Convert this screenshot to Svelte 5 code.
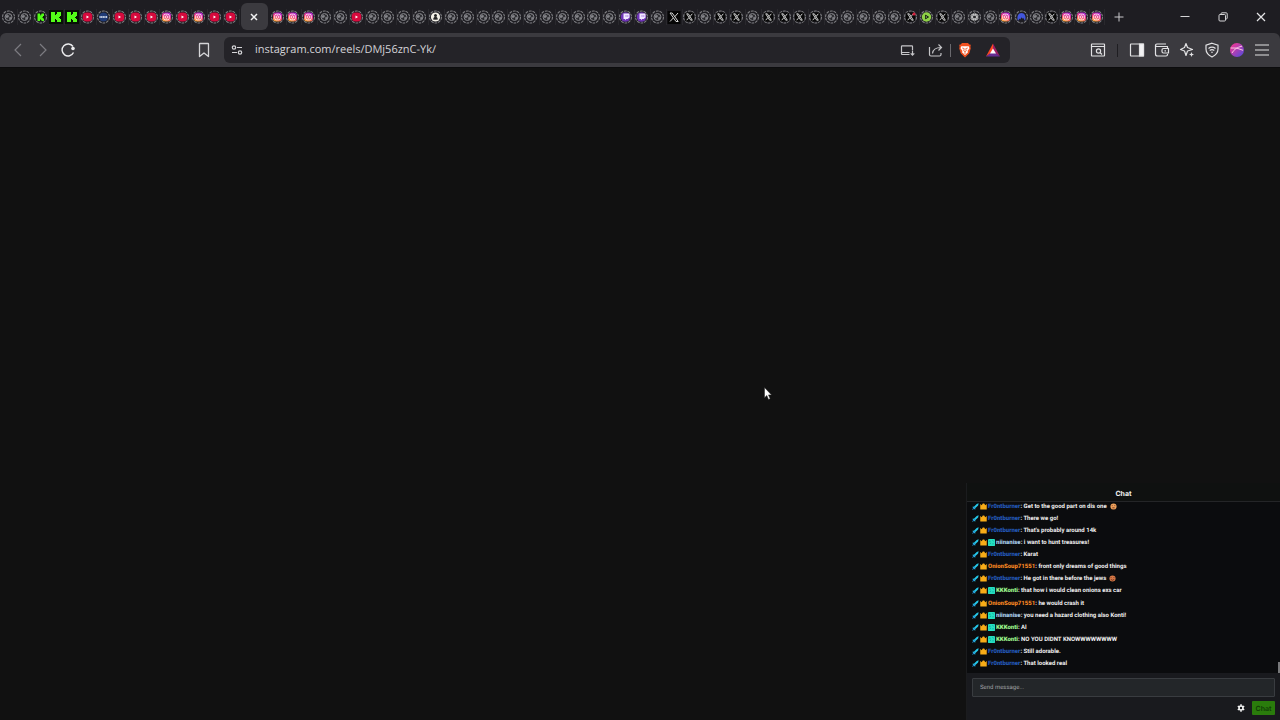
<script>
	let address = 'instagram.com/reels/DMj56znC-Yk/'
	let message = ''

	// one word per tab, "name*3" repeats it
	const before = expand('globe*2 kick kickbig*2 youtube disc youtube*3 insta youtube insta youtube*2')
	const after = expand('insta*3 globe*2 youtube globe*4 wiki globe*11 twitch*2 globe xbig x globe x*2 globe x*4 globe*5 xred rumble x globe gpt globe insta')
	const newest = expand('nord globe x insta*3')

	function expand(list) {
		return list.split(' ').flatMap((item) => {
			const [name, count] = item.split('*')
			return Array(Number(count || 1)).fill(name)
		})
	}

	const users = {
		front: {name: 'Fr0ntburner', color: '#2459b8', badge: false},
		niina: {name: 'niinanise', color: '#a9cbe8', badge: true},
		onion: {name: 'OnionSoup71551', color: '#f28422', badge: false},
		konti: {name: 'KKKonti', color: '#9cf58c', badge: true}
	}

	const messages = [
		{user: users.front, text: 'Get to the good part on dis one', emote: 'smile'},
		{user: users.front, text: 'There we go!'},
		{user: users.front, text: "That's probably around 14k"},
		{user: users.niina, text: 'i want to hunt treasures!'},
		{user: users.front, text: 'Karat'},
		{user: users.onion, text: 'front only dreams of good things'},
		{user: users.front, text: 'He got in there before the jews', emote: 'laugh'},
		{user: users.konti, text: 'that how i would clean onions exs car'},
		{user: users.onion, text: 'he would crash it'},
		{user: users.niina, text: 'you need a hazard clothing also Konti!'},
		{user: users.konti, text: 'Al'},
		{user: users.konti, text: 'NO YOU DIDNT KNOWWWWWWWW'},
		{user: users.front, text: 'Still adorable.'},
		{user: users.front, text: 'That looked real'}
	]
</script>

{#snippet favicon(kind)}
	<svg class="favicon" viewBox="0 0 16 16" aria-hidden="true">
		{#if kind == 'kickbig'}
			<rect x="1" y="1" width="14" height="14" fill="#071006" />
			<path d="M3 3h4v3h1V5h1V3h4v4h-1v1h-1v1h1v1h1v3H9v-2H8v-1H7v3H3z" fill="#53fc18" />
		{:else if kind == 'xbig'}
			<rect x="1.500" y="2" width="13" height="13" fill="#050505" />
			<path d="M4 4h2.200l6 8.500h-2.200zM12 4L8.700 7.800M7.300 9L4 12.500" fill="none" stroke="#d5d5d5" stroke-width="1" />
		{:else}
			<circle cx="7.500" cy="8" r="6" fill="none" stroke="#7f7f83" stroke-width="1.100" stroke-dasharray="2.800 .9" />
			<g transform="translate(-0.500 -0.500)">
				{#if kind == 'globe'}
					<circle cx="8" cy="8.500" r="3.500" fill="#2a2a2e" stroke="#85858a" stroke-width="1" />
					<path d="M5 7.500l2-1 1.500 1-1 1.500-1.500.5zM9 9l2-.5-.5 2-1.500.5zM8.500 5.500l2 1" fill="#85858a" stroke="#77777c" stroke-width="0.600" />
				{:else if kind == 'kick'}
					<rect x="4" y="4.500" width="8" height="8" fill="#0b1808" />
					<path d="M5 5h2.500v2h.5V6h1V5h2.500v2.500h-1v1h-1v.5h1v1h1v2.500H9v-1H8v-1h-.5v2H5z" fill="#53fc18" />
				{:else if kind == 'youtube'}
					<rect x="3.200" y="4" width="9.600" height="9" rx="4" fill="#d60a3d" />
					<path d="M7 7v3l2.500-1.500z" fill="#fff" />
				{:else if kind == 'disc'}
					<circle cx="8" cy="8.500" r="4.500" fill="#203b77" />
					<path d="M4 8.500h8" stroke="#c4cfe2" stroke-width="1.800" stroke-dasharray="1.200 .4" />
				{:else if kind == 'insta'}
					<rect x="3.500" y="4" width="9" height="9" rx="3" fill="url(#insta)" />
					<rect x="5.200" y="5.700" width="5.600" height="5.600" rx="1.600" fill="none" stroke="#fff" stroke-width="0.800" />
					<circle cx="8" cy="8.500" r="1.300" fill="none" stroke="#fff" stroke-width="0.800" />
				{:else if kind == 'wiki'}
					<circle cx="8" cy="8.500" r="4.600" fill="#f2efe6" />
					<circle cx="8" cy="7" r="1.500" fill="#222" />
					<path d="M5.500 10.500h5M6.700 9h2.600v1.500H6.700z" stroke="#222" stroke-width="0.900" fill="#222" />
				{:else if kind == 'twitch'}
					<circle cx="8" cy="8.500" r="4.800" fill="#6f35b5" />
					<path d="M6 5h6v4L10.200 10.500H8.700L7.500 11.800v-1.300H6z" fill="#f1e8ff" />
					<path d="M8.500 6.500v2M10.300 6.500v2" stroke="#a67be0" stroke-width="0.800" />
				{:else if kind == 'rumble'}
					<circle cx="8" cy="8.500" r="4.700" fill="#8fd147" />
					<path d="M7 6.700v3.600l3-1.800z" fill="#16260b" stroke="#16260b" stroke-linejoin="round" />
					<path d="M7.400 7.700v1.600l1.300-.8z" fill="#e4f7d2" />
				{:else if kind == 'gpt'}
					<circle cx="8" cy="8.500" r="4.500" fill="#29292c" />
					<g fill="none" stroke="#e2e2e2" stroke-width="0.700">
						<ellipse cx="8" cy="8.500" rx="1.900" ry="4" />
						<ellipse cx="8" cy="8.500" rx="1.900" ry="4" transform="rotate(60 8 8.500)" />
						<ellipse cx="8" cy="8.500" rx="1.900" ry="4" transform="rotate(120 8 8.500)" />
					</g>
				{:else if kind == 'nord'}
					<path d="M4.500 12.200C2.800 8 5 4.500 8 4.500s5.200 3.500 3.500 7.700L9.600 9.300l-.7 1L8 8.800 6.800 11l-.6-1z" fill="#4256dc" />
				{:else}
					<rect x="3.500" y="4" width="9" height="9" rx="1" fill="#080808" />
					<path d="M5.200 5.300h1.600l4 6.400H9.200zM10.800 5.300L8.500 8M7.500 9l-2.300 2.700" fill="none" stroke="#e0e0e0" stroke-width="0.900" />
					{#if kind == 'xred'}
						<circle cx="11.500" cy="5.500" r="1.600" fill="#d3203c" />
					{/if}
				{/if}
			</g>
		{/if}
	</svg>
{/snippet}

{#snippet tab(kind, narrow)}
	<button class="tab" class:narrow aria-label="{kind} tab">{@render favicon(kind)}</button>
{/snippet}

<!-- gradients shared by the icons -->
<svg class="defs" width="0" height="0" aria-hidden="true">
	<linearGradient id="insta" x1="0.700" y1="0" x2="0.300" y2="1">
		<stop offset="0" stop-color="#b02be0" />
		<stop offset="0.500" stop-color="#ef3474" />
		<stop offset="1" stop-color="#ffb13d" />
	</linearGradient>
	<linearGradient id="profile" x1="0" y1="0" x2="1" y2="1">
		<stop offset="0.200" stop-color="#e0399b" />
		<stop offset="1" stop-color="#4b4be0" />
	</linearGradient>
</svg>

<div class="browser">
	<header class="tabbar">
		<nav class="tabs" aria-label="Tabs">
			{#each before as kind}
				{@render tab(kind, false)}
			{/each}
			<button class="active" aria-label="Close tab">
				<svg width="10" height="10" viewBox="0 0 10 10"><path d="M2 2l6 6M8 2L2 8" stroke="#f2f2f2" stroke-width="1.500" /></svg>
			</button>
			{#each after as kind}
				{@render tab(kind, false)}
			{/each}
			{#each newest as kind}
				{@render tab(kind, true)}
			{/each}
		</nav>
		<div class="window">
			<button class="new" aria-label="New tab">
				<svg width="10" height="10" viewBox="0 0 10 10"><path d="M5 .5v9M.5 5h9" stroke="#c9c9cc" /></svg>
			</button>
			<button aria-label="Minimize">
				<svg width="10" height="10" viewBox="0 0 10 10"><path d="M.5 4.500h9" stroke="#d5d5d7" /></svg>
			</button>
			<button aria-label="Restore">
				<svg width="10" height="10" viewBox="0 0 10 10" fill="none" stroke="#d5d5d7"><rect x="1" y="2.500" width="6.500" height="6.500" rx="1" /><path d="M3 2.500V1.800q0-1 1-1h4.200q1 0 1 1V6q0 1-1 1h-.7" /></svg>
			</button>
			<button aria-label="Close">
				<svg width="10" height="10" viewBox="0 0 10 10"><path d="M1 1l8 8M9 1L1 9" stroke="#e5e5e7" stroke-width="1.200" /></svg>
			</button>
		</div>
	</header>

	<div class="toolbar">
		<div class="nav">
			<button aria-label="Back"><svg width="16" height="16" viewBox="0 0 16 16" fill="none" stroke="#7d7c82" stroke-width="1.200"><path d="M11 2L5 8l6 6" /></svg></button>
			<button aria-label="Forward"><svg width="16" height="16" viewBox="0 0 16 16" fill="none" stroke="#7d7c82" stroke-width="1.200"><path d="M5 2l6 6-6 6" /></svg></button>
			<button aria-label="Reload">
				<svg width="16" height="16" viewBox="0 0 16 16" fill="none" stroke="#ececee" stroke-width="1.400"><path d="M13.500 10.500A6 6 0 1 1 13 4.500" /><circle cx="13" cy="6.500" r="1.800" fill="#ececee" stroke="none" /></svg>
			</button>
			<button class="bookmark" aria-label="Bookmark">
				<svg width="16" height="16" viewBox="0 0 16 16" fill="none" stroke="#d5d5d8" stroke-width="1.300" stroke-linejoin="round"><path d="M3.500 2q0-.5.500-.5h8q.5 0 .5.500v12.500L8 11l-4.500 3.500z" /></svg>
			</button>
		</div>

		<form class="address">
			<button class="site" type="button" aria-label="Site settings">
				<svg width="12" height="12" viewBox="0 0 12 12" fill="none" stroke="#d5d5d8" stroke-width="1.200"><circle cx="3" cy="3.500" r="1.700" /><path d="M6 3.500h5M1 8.500h5" /><circle cx="9" cy="8.500" r="1.700" /></svg>
			</button>
			<input aria-label="Address" bind:value={address} />
			<button type="button" aria-label="Install app">
				<svg width="16" height="16" viewBox="0 0 16 16" fill="none" stroke="#c5c5c8" stroke-width="1.200"><path d="M9.500 12.500H2.500q-1 0-1-1V4.500q0-.7.700-.7h9.600q.7 0 .7.700v3.500M1.500 10.500h8M12.500 8.500v4.500M10.700 11.300l1.800 1.800 1.800-1.800" /></svg>
			</button>
			<button type="button" aria-label="Share">
				<svg width="16" height="16" viewBox="0 0 16 16" fill="none" stroke="#c5c5c8" stroke-width="1.200"><path d="M1.500 5v7.500q0 1.500 1.500 1.500h8.500q1.500 0 1.500-1.500V11M4.500 11.500C5 7.500 7.500 5.500 13 5.500M10.500 2.500l3 3-3 3" /></svg>
			</button>
			<span class="split"></span>
			<button class="shields" type="button" aria-label="Brave Shields">
				<svg width="16" height="16" viewBox="0 0 16 16"><path d="M5 1h6l1.300 1.500 1.500.3-.4 2.200.4 1.300-1.500 5L8 15.500l-4.300-4.200-1.500-5L2.600 5l-.4-2.200 1.500-.3z" fill="#f0501f" /><path d="M4.300 4.200h7.400l.8 2L10.500 9l.5 1.300L8 13l-3-2.700L5.500 9l-2-2.800z" fill="#fff" /><path d="M5.200 6l2 .6L6.800 9 8 10l1.200-1-.4-2.400 2-.6M7 11h2" fill="none" stroke="#f0501f" stroke-width="0.800" /></svg>
			</button>
			<button class="rewards" type="button" aria-label="Brave Rewards">
				<svg width="16" height="16" viewBox="0 0 16 16"><path d="M8 1.500L1 14.500l7-4.500z" fill="#ff4724" /><path d="M8 1.500l7 13L8 10z" fill="#9e1f63" /><path d="M1 14.500h14L8 9z" fill="#662d91" /><path d="M8 6.500l3 5H5z" fill="#fff" /></svg>
			</button>
		</form>

		<div class="tools">
			<button class="find" aria-label="Search page">
				<svg width="16" height="16" viewBox="0 0 16 16" fill="none" stroke="#e2e2e4" stroke-width="1.200"><rect x="1.500" y="2" width="13" height="12" rx="0.500" /><path d="M1.500 4.500h13M10 10.500l2 2" /><circle cx="8.500" cy="9" r="2.100" /></svg>
			</button>
			<span class="split"></span>
			<button aria-label="Sidebar">
				<svg width="16" height="16" viewBox="0 0 16 16" fill="none" stroke="#e2e2e4" stroke-width="1.200"><rect x="1.500" y="2" width="13" height="12" rx="0.500" /><path d="M10.500 2h4v12h-4z" fill="#f3f3f4" /></svg>
			</button>
			<button aria-label="Wallet">
				<svg width="16" height="16" viewBox="0 0 16 16" fill="none" stroke="#e2e2e4" stroke-width="1.200" stroke-linejoin="round"><path d="M13.500 6V4.500H3q-1.500 0-1.500-1.200T3 2h9M1.500 3.300V12q0 2 2 2h8.500q1.500 0 1.500-1.500V12" /><path d="M14.500 6.500h-5q-1.500 0-1.500 1.500v1.500q0 1.500 1.500 1.500h5z" /><path d="M10.500 8.800h1.500" /></svg>
			</button>
			<button aria-label="Leo AI">
				<svg width="16" height="16" viewBox="0 0 16 16" fill="none" stroke="#e2e2e4" stroke-width="1.200" stroke-linejoin="round"><path d="M7 1.500l1.500 4L13.500 7.500 8.500 9 7 13.500 5.500 9 1.500 7.500l4-2z" /><path d="M12.500 10l.7 1.800 1.800.7-1.800.7-.7 1.800-.7-1.800-1.800-.7 1.800-.7z" fill="#e2e2e4" stroke="none" /></svg>
			</button>
			<button aria-label="VPN">
				<svg width="16" height="16" viewBox="0 0 16 16" fill="none" stroke="#e2e2e4" stroke-width="1.200"><path d="M8 1.200l6 2V7q0 5-6 8-6-3-6-8V3.200z" /><path d="M4.500 6.500q3.500-2.600 7 0M5.700 8.500q2.300-1.600 4.600 0" /><circle cx="8" cy="10.300" r="0.800" fill="#e2e2e4" stroke="none" /></svg>
			</button>
			<button aria-label="Profile">
				<svg width="16" height="16" viewBox="0 0 16 16"><circle cx="8" cy="8" r="7" fill="url(#profile)" /><path d="M1.500 6q6-1 12.500 2.300M3 11Q6 5.500 13 4.200" fill="none" stroke="#ffc4e5" /></svg>
			</button>
			<button aria-label="Menu">
				<svg width="16" height="16" viewBox="0 0 16 16"><path d="M1 3h14M1 8h14M1 13h14" stroke="#e2e2e4" stroke-width="1.200" /></svg>
			</button>
		</div>
	</div>

	<main>
		<section class="chat">
			<h2>Chat</h2>
			<ul>
				{#each messages as msg}
					<li>
						<svg width="7" height="7" viewBox="0 0 8 8"><path d="M7.600.3L7 2.800 3.600 6 4 7.200l-.8.2-1-1L1 7.600.3 7l1.300-1.200-1-1L1 4l1.200.3L5.400 1z" fill="#25c8e8" /><path d="M1 7l2-2" stroke="#2a64d2" /></svg>
						<svg width="7" height="7" viewBox="0 0 8 8"><path d="M.3 1.200l1.700 1.500L3.200.7h1.600L6 2.700l1.700-1.500V7.300H.3z" fill="#f7ac18" /></svg>
						{#if msg.user.badge}
							<svg width="7" height="7" viewBox="0 0 8 8"><rect width="8" height="8" rx="1" fill="#25dec0" /><path d="M1 2.500h2M5 1.500l1.500 1M2 5.500l1.500-1M5 5.500h1.500" fill="none" stroke="#0b8f8a" stroke-width="0.800" /></svg>
						{/if}
						<span><b style="color: {msg.user.color}">{msg.user.name}</b>: {msg.text}</span>
						{#if msg.emote}
							<svg class="emote" width="7" height="7" viewBox="0 0 8 8">
								<circle cx="4" cy="4" r="3.500" fill={msg.emote == 'smile' ? '#efa25b' : '#d87945'} />
								<path d={msg.emote == 'smile' ? 'M2 3h1M5 3h1M2.700 5.500h2.600' : 'M2 2.500l1 1M6 2.500l-1 1M2 5q2 2 4 0'} fill="none" stroke="#5b241b" stroke-width="0.900" />
							</svg>
						{/if}
					</li>
				{/each}
			</ul>
			<span class="thumb"></span>
			<form class="composer">
				<input aria-label="Send message" placeholder="Send message..." bind:value={message} />
				<div class="actions">
					<button class="gear" type="button" aria-label="Chat settings">
						<svg width="8" height="8" viewBox="0 0 8 8"><circle cx="4" cy="4" r="2" fill="none" stroke="#f4f4f4" stroke-width="1.600" /><path d="M4 .3v1.400M4 6.300v1.400M.8 2.200l1.200.7M6 5.100l1.200.7M.8 5.800L2 5.100M6 2.900l1.200-.7" stroke="#f4f4f4" stroke-width="1.500" /></svg>
					</button>
					<button class="send" type="button">Chat</button>
				</div>
			</form>
		</section>
		<svg class="cursor" width="8" height="13" viewBox="0 0 8 13"><path d="M.5.5v10.200l2.300-2.200 1.700 4 1.700-.7-1.700-3.900h3z" fill="#fff" stroke="#222" stroke-width="0.500" /></svg>
	</main>
</div>

<style>
	:global(body) {
		margin: 0;
		background: #111111;
	}
	.browser {
		display: flex;
		flex-direction: column;
		min-height: 100vh;
		background: #1e1d22;
		font-family: Inter, "Liberation Sans", sans-serif;
		color: #f1f1f1;
		text-rendering: geometricPrecision;
	}
	.defs {
		position: absolute;
	}
	button {
		display: flex;
		align-items: center;
		justify-content: center;
		padding: 0;
		border: 0;
		background: none;
		font-family: inherit;
	}
	input, button {
		text-rendering: inherit;
	}
	svg {
		display: block;
		flex: none;
	}

	.tabbar {
		display: flex;
		height: 33px;
	}
	.tabs {
		display: flex;
		flex: 1;
		align-items: center;
		min-width: 0;
		padding-left: 1px;
	}
	.tab {
		flex: 1;
		min-width: 0;
		height: 16px;
		box-shadow: 1px 0 0 #29282d;
	}
	.narrow {
		flex: 0 1 15px;
	}
	.favicon {
		width: 16px;
		height: 16px;
	}
	.active {
		flex: none;
		width: 27px;
		height: 27px;
		margin: 0 2px;
		border-radius: 6px;
		background: #3b3a3f;
	}
	.window {
		display: flex;
		flex: none;
		width: 176px;
	}
	.window button {
		width: 38px;
	}
	.window .new {
		width: 30px;
		margin-right: 32px;
	}

	.toolbar {
		display: flex;
		align-items: center;
		box-sizing: border-box;
		height: 34px;
		border-radius: 6px 6px 0 0;
		background: #3b3a3f;
	}
	.nav {
		display: flex;
		flex: none;
		gap: 9px;
		width: 214px;
		padding-left: 10px;
	}
	.nav .bookmark {
		margin-left: auto;
		margin-right: 12px;
	}
	.address {
		display: flex;
		flex: 1;
		align-items: center;
		gap: 12px;
		min-width: 0;
		height: 26px;
		padding: 0 9px 0 7px;
		margin-right: 80px;
		border-radius: 6px;
		background: #242328;
	}
	.address input {
		flex: 1;
		min-width: 0;
		padding: 0;
		border: 0;
		outline: 0;
		background: none;
		color: #d5d4d8;
		font: 11px/20px "Open Sans", "Noto Sans", sans-serif;
	}
	.split {
		width: 1px;
		height: 13px;
		margin: 0 -6px;
		background: #6a696e;
	}
	.tools {
		display: flex;
		flex: none;
		align-items: center;
		gap: 9px;
		margin-right: 10px;
	}
	.tools .split {
		margin: 0 2px;
		background: #1f1e22;
	}

	main {
		position: relative;
		display: flex;
		flex: 1;
		align-items: flex-end;
		justify-content: flex-end;
		border-top: 1px solid #0c0c0e;
		background: #111111;
	}
	.cursor {
		position: absolute;
		left: 764px;
		top: 319px;
	}
	.chat {
		position: relative;
		display: flex;
		flex-direction: column;
		width: 314px;
		box-sizing: border-box;
		border-left: 1px solid #1b1c1e;
		background: #0b0c0e;
	}
	h2 {
		margin: 0;
		padding-top: 4px;
		border-bottom: 1px solid #242527;
		background: #0f1110;
		font-size: 7px;
		font-weight: 700;
		line-height: 14px;
		text-align: center;
	}
	ul {
		display: flex;
		flex-direction: column;
		justify-content: space-between;
		height: 166px;
		margin: 0;
		padding: 0 4px 5px 5px;
		list-style: none;
	}
	li {
		display: flex;
		align-items: center;
		gap: 1px;
		height: 9px;
		font-family: Roboto, Inter, sans-serif;
		font-size: 6px;
		font-weight: 700;
		line-height: 9px;
		white-space: nowrap;
	}
	.emote {
		margin-left: 2px;
	}
	.thumb {
		position: absolute;
		right: 0;
		bottom: 47px;
		width: 2px;
		height: 11px;
		background: #77787a;
	}
	.composer {
		padding: 5px;
		background: #191a1e;
	}
	.composer input {
		display: block;
		box-sizing: border-box;
		width: 100%;
		height: 19px;
		padding: 0 7px;
		border: 1px solid #393c40;
		border-radius: 1px;
		outline: 0;
		background: #232629;
		color: #f1f1f1;
		font: 6px/16px Roboto, Inter, sans-serif;
	}
	.composer input::placeholder {
		color: #a0a2a5;
		opacity: 1;
	}
	.actions {
		display: flex;
		align-items: center;
		justify-content: flex-end;
		gap: 7px;
		margin-top: 4px;
	}
	.send {
		width: 23px;
		height: 14px;
		border-radius: 1px;
		background: #2a7c0c;
		color: #103c06;
		font-size: 7px;
		font-weight: 600;
	}
</style>
